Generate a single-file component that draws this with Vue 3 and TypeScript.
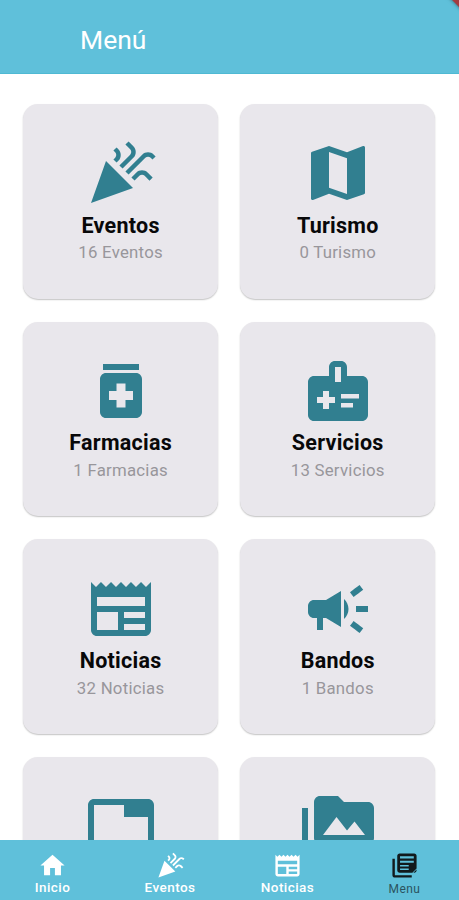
<script setup lang="ts">
interface Tile {
  title: string
  count: string
  icon: string
}

interface NavItem {
  label: string
  icon: string
  active?: boolean
}

const icons: Record<string, string> = {
  celebration:
    'M2 22l14-5-9-9zM14.53 12.53l5.59-5.59c.49-.49 1.28-.49 1.77 0l.59.59 1.06-1.06-.59-.59c-1.07-1.07-2.82-1.07-3.89 0l-5.59 5.59 1.06 1.06zM10.06 6.88l-.59.59 1.06 1.06.59-.59c1.07-1.07 1.07-2.82 0-3.89l-.59-.59-1.06 1.07.59.59c.48.48.48 1.28 0 1.76zM17.06 11.88l-1.59 1.59 1.06 1.06 1.59-1.59c.49-.49 1.28-.49 1.77 0l1.61 1.61 1.06-1.06-1.61-1.61c-1.08-1.07-2.82-1.07-3.89 0zM15.06 5.88l-3.59 3.59 1.06 1.06 3.59-3.59c1.07-1.07 1.07-2.82 0-3.89l-1.59-1.59-1.06 1.06 1.59 1.59c.48.49.48 1.29 0 1.77z',
  map: 'M20.5 3l-.16.03L15 5.1 9 3 3.36 4.9c-.21.07-.36.25-.36.48V20.5c0 .28.22.5.5.5l.16-.03L9 18.9l6 2.1 5.64-1.9c.21-.07.36-.25.36-.48V3.5c0-.28-.22-.5-.5-.5zM15 19l-6-2.11V5l6 2.11V19z',
  medication:
    'M6 3h12v2H6zM17 6H7c-1.1 0-2 .9-2 2v11c0 1.1.9 2 2 2h10c1.1 0 2-.9 2-2V8c0-1.1-.9-2-2-2zm-1 9h-2.5v2.5h-3V15H8v-3h2.5V9.5h3V12H16v3z',
  badge:
    'M20 7h-5V4c0-1.1-.9-2-2-2h-2c-1.1 0-2 .9-2 2v3H4c-1.1 0-2 .9-2 2v11c0 1.1.9 2 2 2h16c1.1 0 2-.9 2-2V9c0-1.1-.9-2-2-2zM11 4h2v5h-2V4zm0 12H9v2H7v-2H5v-2h2v-2h2v2h2v2zm2-1.5V13h6v1.5h-6zm0 3V16h4v1.5h-4z',
  newspaper:
    'M22 3l-1.67 1.67L18.67 3 17 4.67 15.33 3l-1.66 1.67L12 3l-1.67 1.67L8.67 3 7 4.67 5.33 3 3.67 4.67 2 3v16c0 1.1.9 2 2 2h16c1.1 0 2-.9 2-2V3zM11 19H4v-6h7v6zm9 0h-7v-2h7v2zm0-4h-7v-2h7v2zm0-4H4V8h16v3z',
  campaign:
    'M18 11v2h4v-2h-4zm-2 6.61c.96.71 2.21 1.65 3.2 2.39.4-.53.8-1.07 1.2-1.6-.99-.74-2.24-1.68-3.2-2.4-.4.54-.8 1.08-1.2 1.61zM20.4 5.6c-.4-.53-.8-1.07-1.2-1.6-.99.74-2.24 1.68-3.2 2.4.4.53.8 1.07 1.2 1.6.96-.72 2.21-1.65 3.2-2.4zM4 9c-1.1 0-2 .9-2 2v2c0 1.1.9 2 2 2h1v4h2v-4h1l5 3V6L8 9H4zm11.5 3c0-1.33-.58-2.53-1.5-3.35v6.69c.92-.81 1.5-2.01 1.5-3.34z',
  tab: 'M21 3H3c-1.1 0-2 .9-2 2v14c0 1.1.9 2 2 2h18c1.1 0 2-.9 2-2V5c0-1.1-.9-2-2-2zm0 16H3V5h10v4h8v10z',
  media:
    'M2 6H0v5h.01L0 20c0 1.1.9 2 2 2h18v-2H2V6zm20-2h-8l-2-2H6c-1.1 0-1.99.9-1.99 2L4 16c0 1.1.9 2 2 2h16c1.1 0 2-.9 2-2V6c0-1.1-.9-2-2-2zM7 15l4.5-6 3.5 4.51 2.5-3.01L21 15H7z',
  home: 'M10 20v-6h4v6h5v-8h3L12 3 2 12h3v8z',
  library:
    'M4 6.5H2V20c0 1.1.9 2 2 2h14v-2H4zM20 2H8c-1.1 0-2 .9-2 2v12c0 1.1.9 2 2 2h10.5l3.5-3.5V4c0-1.1-.9-2-2-2zM8.3 4.4h11.4v1.9H8.3zM8.3 8h11.4v1.8H8.3zM8.3 11.5h7.2v1.4H8.3zM8.3 14.4h7.2v1.4H8.3zM19.3 18H20c1.1 0 2-.9 2-2v-.7z',
}

const tiles: Tile[] = [
  { title: 'Eventos', count: '16 Eventos', icon: 'celebration' },
  { title: 'Turismo', count: '0 Turismo', icon: 'map' },
  { title: 'Farmacias', count: '1 Farmacias', icon: 'medication' },
  { title: 'Servicios', count: '13 Servicios', icon: 'badge' },
  { title: 'Noticias', count: '32 Noticias', icon: 'newspaper' },
  { title: 'Bandos', count: '1 Bandos', icon: 'campaign' },
  { title: '', count: '', icon: 'tab' },
  { title: '', count: '', icon: 'media' },
]

const nav: NavItem[] = [
  { label: 'Inicio', icon: 'home' },
  { label: 'Eventos', icon: 'celebration' },
  { label: 'Noticias', icon: 'newspaper' },
  { label: 'Menu', icon: 'library', active: true },
]
</script>

<template>
  <div class="screen">
    <header class="app-bar">
      <h1>Menú</h1>
      <span class="ribbon"></span>
    </header>
    <main class="grid">
      <article v-for="tile in tiles" :key="tile.icon" class="tile">
        <svg class="tile-icon" viewBox="0 0 24 24"><path :d="icons[tile.icon]" fill-rule="evenodd" /></svg>
        <h2>{{ tile.title }}</h2>
        <p>{{ tile.count }}</p>
      </article>
    </main>
    <nav class="bottom-nav">
      <a v-for="item in nav" :key="item.label" class="nav-item" :class="{ active: item.active }">
        <svg viewBox="0 0 24 24"><path :d="icons[item.icon]" fill-rule="evenodd" /></svg>
        <span>{{ item.label }}</span>
      </a>
    </nav>
  </div>
</template>

<style>
body {
  margin: 0;
  overflow: hidden;
}
</style>

<style scoped>
.screen {
  display: flex;
  flex-direction: column;
  width: 459px;
  height: 900px;
  overflow: hidden;
  background: #fff;
  font-family: Roboto, sans-serif;
}
.app-bar {
  position: relative;
  flex: none;
  display: flex;
  align-items: center;
  box-sizing: border-box;
  height: 74px;
  padding: 7px 0 0 80px;
  overflow: hidden;
  background: #5fc0da;
  border-bottom: 1px solid #4fb9d3;
}
h1 {
  margin: 0;
  font-size: 26.5px;
  font-weight: 400;
  line-height: 32px;
  color: #fff;
}
.ribbon {
  position: absolute;
  top: -11px;
  right: -19px;
  width: 40px;
  height: 14px;
  background: #a33c40;
  box-shadow: 0 0 4px rgba(0, 0, 0, 0.5);
  transform: rotate(45deg);
}
.grid {
  flex: 1;
  min-height: 0;
  display: grid;
  grid-template-columns: 194.5px 194.5px;
  grid-auto-rows: 194.6px;
  gap: 23.1px 22.6px;
  padding: 30px 23.4px 0;
  overflow: hidden;
}
.tile {
  display: flex;
  flex-direction: column;
  align-items: center;
  box-sizing: border-box;
  padding-top: 33.3px;
  border-radius: 15px;
  background: #e9e7ec;
  box-shadow: 0 1px 1.5px rgba(0, 0, 0, 0.24);
}
.tile-icon {
  flex: none;
  width: 72px;
  height: 72px;
  fill: #317f90;
}
h2 {
  margin: 2.3px 0 0;
  font-size: 21.5px;
  font-weight: 700;
  line-height: 28px;
  letter-spacing: 0.25px;
  color: #080809;
}
p {
  margin: 0.7px 0 0;
  font-size: 16.8px;
  line-height: 24px;
  letter-spacing: 0.25px;
  color: #98969b;
}
.bottom-nav {
  position: relative;
  flex: none;
  display: grid;
  grid-template-columns: 105px 130px 105px 129px;
  height: 60px;
  background: #5fc0da;
}
.nav-item {
  display: flex;
  flex-direction: column;
  align-items: center;
  padding-top: 11px;
  font-size: 13.5px;
  font-weight: 500;
  line-height: 14px;
  letter-spacing: 0.45px;
  color: #fff;
}
.nav-item svg {
  flex: none;
  width: 29px;
  height: 29px;
  fill: currentColor;
}
.nav-item.active {
  color: #111a1d;
}
.nav-item.active span {
  margin-top: 2px;
  font-size: 12px;
  font-weight: 400;
  color: #2b5460;
}
</style>
